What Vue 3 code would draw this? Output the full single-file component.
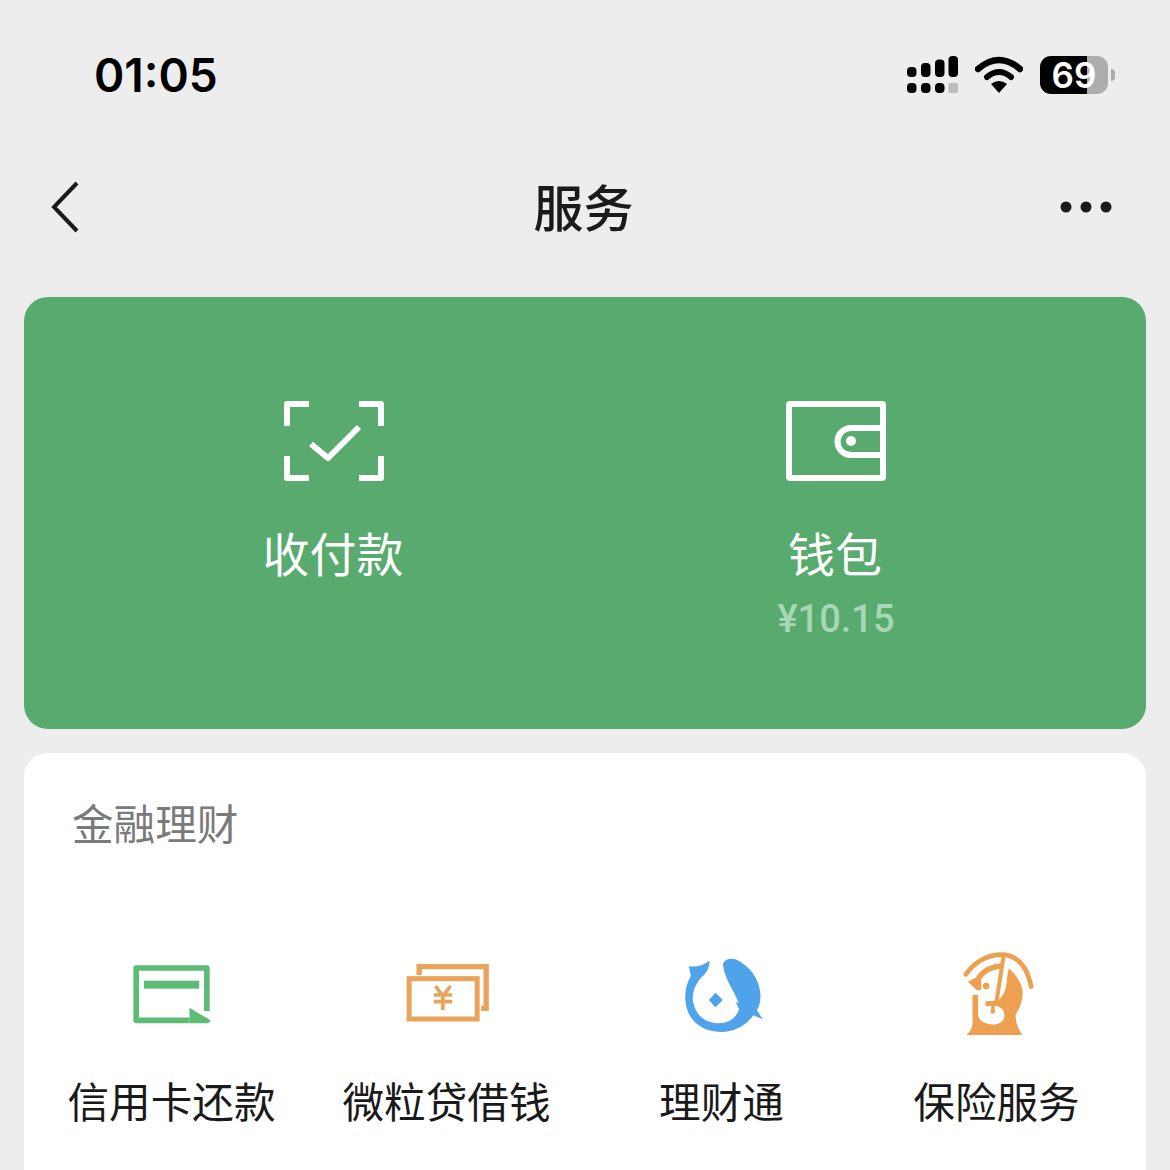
<template>
  <div class="page">
    <!-- Barre d'état -->
    <div class="status-bar">
      <span class="time">01:05</span>
      <div class="status-icons">
        <svg class="signal" width="51" height="38" viewBox="0 0 51 38">
          <g fill="#000">
            <rect x="0" y="11" width="9.5" height="10" rx="4" />
            <rect x="14" y="7" width="9.5" height="14" rx="4" />
            <rect x="28" y="3.5" width="9.5" height="17.5" rx="4" />
            <rect x="41.5" y="0" width="9.5" height="21" rx="4" />
            <rect x="0" y="27" width="9.5" height="10" rx="4" />
            <rect x="14" y="27" width="9.5" height="10" rx="4" />
            <rect x="28" y="27" width="9.5" height="10" rx="4" />
          </g>
          <rect x="41.5" y="27" width="9.5" height="10" rx="2" fill="#bdbdbd" />
        </svg>
        <svg width="48" height="38" viewBox="0 0 48 38">
          <path d="M3 13 Q24 -5 45 13" fill="none" stroke="#000" stroke-width="6.5" stroke-linecap="round" />
          <path d="M12 21 Q24 11 36 21" fill="none" stroke="#000" stroke-width="6" stroke-linecap="round" />
          <path d="M16 28 Q24 22 32 28 L24 37 Z" fill="#000" />
        </svg>
        <div class="battery-wrap">
          <div class="battery"><span>69</span></div>
          <i class="battery-nub"></i>
        </div>
      </div>
    </div>

    <!-- En-tête -->
    <div class="header">
      <svg width="28" height="52" viewBox="0 0 28 52">
        <path d="M26 2 L3 26 L26 50" fill="none" stroke="#1a1a1a" stroke-width="4" />
      </svg>
      <span class="title">服务</span>
      <svg class="more" width="52" height="12" viewBox="0 0 52 12">
        <circle cx="6" cy="6" r="5.5" fill="#1a1a1a" />
        <circle cx="26" cy="6" r="5.5" fill="#1a1a1a" />
        <circle cx="46" cy="6" r="5.5" fill="#1a1a1a" />
      </svg>
    </div>

    <!-- Carte verte -->
    <div class="green-card">
      <div class="green-item">
        <svg width="100" height="80" viewBox="0 0 100 80">
          <g fill="none" stroke="#fff" stroke-width="6" stroke-linejoin="round">
            <path d="M25 3 H3 V25" />
            <path d="M75 3 H97 V25" />
            <path d="M3 55 V77 H25" />
            <path d="M97 55 V77 H75" />
            <path d="M27 43 L44 57 L75 26" />
          </g>
        </svg>
        <div class="green-label">收付款</div>
      </div>
      <div class="green-item">
        <svg width="100" height="80" viewBox="0 0 100 80">
          <g fill="none" stroke="#fff" stroke-width="6" stroke-linejoin="round">
            <rect x="3" y="3" width="94" height="74" rx="1" />
            <path d="M95 27 H65 A13.5 13.5 0 0 0 65 54 H95" />
          </g>
          <circle cx="65" cy="40" r="5" fill="#fff" />
        </svg>
        <div class="green-label">钱包</div>
        <div class="amount">¥10.15</div>
      </div>
    </div>

    <!-- Carte blanche -->
    <div class="white-card">
      <div class="section-title">金融理财</div>
      <div class="service-grid">
        <div class="service">
          <svg width="120" height="100" viewBox="4.5 0 360 300">
            <g fill="#5cbb74">
              <path d="M289 213 V84 H77 V241 H237" fill="none" stroke="#5cbb74" stroke-width="17" stroke-linejoin="round" />
              <rect x="100" y="122" width="166" height="24" />
              <path d="M237 203 L300 241 Q298 250 288 250 H237 Z" />
            </g>
          </svg>
          <div class="service-label">信用卡还款</div>
        </div>
        <div class="service">
          <svg width="120" height="100" viewBox="-10.5 0 360 300">
            <g fill="none" stroke="#e9a35a">
              <path d="M86 105 V80 H287 V205 H272" stroke-width="16" />
              <rect x="56" y="116" width="204" height="121" stroke-width="15" />
              <path d="M135 138 L157 168 L180 138 M130 165 H185 M130 185 H185 M157 168 V210" stroke-width="11" />
            </g>
          </svg>
          <div class="service-label">微粒贷借钱</div>
        </div>
        <div class="service">
          <svg width="120" height="100" viewBox="-10.5 0 360 300">
            <path fill="#4fa3ea" d="M172 72 C178 56 198 52 215 60 C255 80 283 120 285 165 Q285 195 274 210 L292 238 L264 226 Q225 276 165 276 C110 274 75 245 64 205 C54 170 60 135 76 108 L70 78 Q100 85 132 62 Q132 85 118 102 C95 122 80 150 82 180 C88 225 120 250 160 250 Q205 250 221 208 L210 185 L220 190 C205 150 178 120 172 72 Z" />
            <path fill="#4fa3ea" d="M150 158 L172 180 L150 202 L130 180 Z" />
          </svg>
          <div class="service-label">理财通</div>
        </div>
        <div class="service">
          <svg width="120" height="100" viewBox="-10.5 0 360 300">
            <g fill="none" stroke="#eda04f">
              <path d="M76 103 Q120 42 190 44 Q255 52 272 140" stroke-width="14" stroke-linecap="round" />
              <path d="M190 44 L168 185" stroke-width="12" />
              <path d="M112 120 Q128 84 182 78" stroke-width="16" />
              <path d="M157 198 V214" stroke-width="10" />
            </g>
            <g fill="#eda04f">
              <path d="M82 125 L122 104 L122 150 L108 150 Z" />
              <path d="M78 285 Q95 270 96 250 V165 H113 V228 Q122 254 160 254 Q188 252 192 228 Q192 205 170 198 H135 V184 L172 182 Q195 165 198 130 Q200 105 205 85 Q245 120 247 160 Q245 195 225 225 Q225 255 245 285 Z" />
              <circle cx="137" cy="138" r="10" />
              <circle cx="157" cy="214" r="7" />
            </g>
          </svg>
          <div class="service-label">保险服务</div>
        </div>
      </div>
    </div>
  </div>
</template>

<script setup>
</script>

<style>
html,
body {
  margin: 0;
  background: #ededed;
  overflow: hidden;
}
</style>

<style scoped>
.page {
  height: 1170px;
  overflow: hidden;
  background: #ededed;
  font-family: "Noto Sans CJK SC", "Noto Sans", sans-serif;
  color: #1a1a1a;
}

/* Barre d'état */
.status-bar {
  display: flex;
  justify-content: space-between;
  align-items: center;
  height: 150px;
  padding: 0 55px 0 94px;
}

.time {
  font-family: Inter, sans-serif;
  font-size: 46px;
  font-weight: 600;
  color: #000;
}

.status-icons {
  display: flex;
  align-items: center;
  gap: 17px;
}

.battery-wrap {
  display: flex;
  align-items: center;
  gap: 3px;
}

.battery {
  position: relative;
  width: 68px;
  height: 38px;
  border-radius: 11px;
  background: linear-gradient(90deg, #000 69%, #adadad 69%);
  color: #fff;
  font-family: Inter, sans-serif;
  font-size: 35px;
  font-weight: 600;
  line-height: 38px;
  text-align: center;
}

.battery-nub {
  width: 4px;
  height: 12px;
  border-radius: 0 4px 4px 0;
  background: #adadad;
}

/* En-tête */
.header {
  display: grid;
  grid-template-columns: 1fr auto 1fr;
  align-items: center;
  height: 114px;
  padding: 0 58px 0 51px;
}

.title {
  margin-bottom: 4px;
  font-size: 50px;
  font-weight: 500;
  line-height: 60px;
  transform: translateX(2px);
}

.more {
  justify-self: end;
}

/* Carte verte */
.green-card {
  display: grid;
  grid-template-columns: 1fr 1fr;
  height: 432px;
  margin: 33px 24px 24px;
  padding: 104px 59px 0;
  box-sizing: border-box;
  border-radius: 24px;
  background: #58aa6e;
}

.green-item {
  display: flex;
  flex-direction: column;
  align-items: center;
}

.green-label {
  margin-top: 41px;
  margin-right: 2px;
  font-size: 47px;
  line-height: 60px;
  color: #fff;
}

.amount {
  margin-top: 15px;
  font-family: Roboto, sans-serif;
  font-size: 38px;
  font-weight: 500;
  line-height: 44px;
  color: #a6d8b4;
}

/* Carte blanche */
.white-card {
  margin: 0 24px;
  height: 460px;
  padding: 44px 10px 0;
  box-sizing: border-box;
  border-radius: 24px;
  background: #fff;
}

.section-title {
  padding-left: 38px;
  font-size: 41.6px;
  line-height: 50px;
  color: #7a7a7a;
}

.service-grid {
  display: grid;
  grid-template-columns: repeat(4, 275px);
  margin-top: 93px;
}

.service {
  display: flex;
  flex-direction: column;
  align-items: center;
}

.service-label {
  margin-top: 35px;
  font-size: 41.6px;
  line-height: 50px;
  color: #1a1a1a;
}
</style>
